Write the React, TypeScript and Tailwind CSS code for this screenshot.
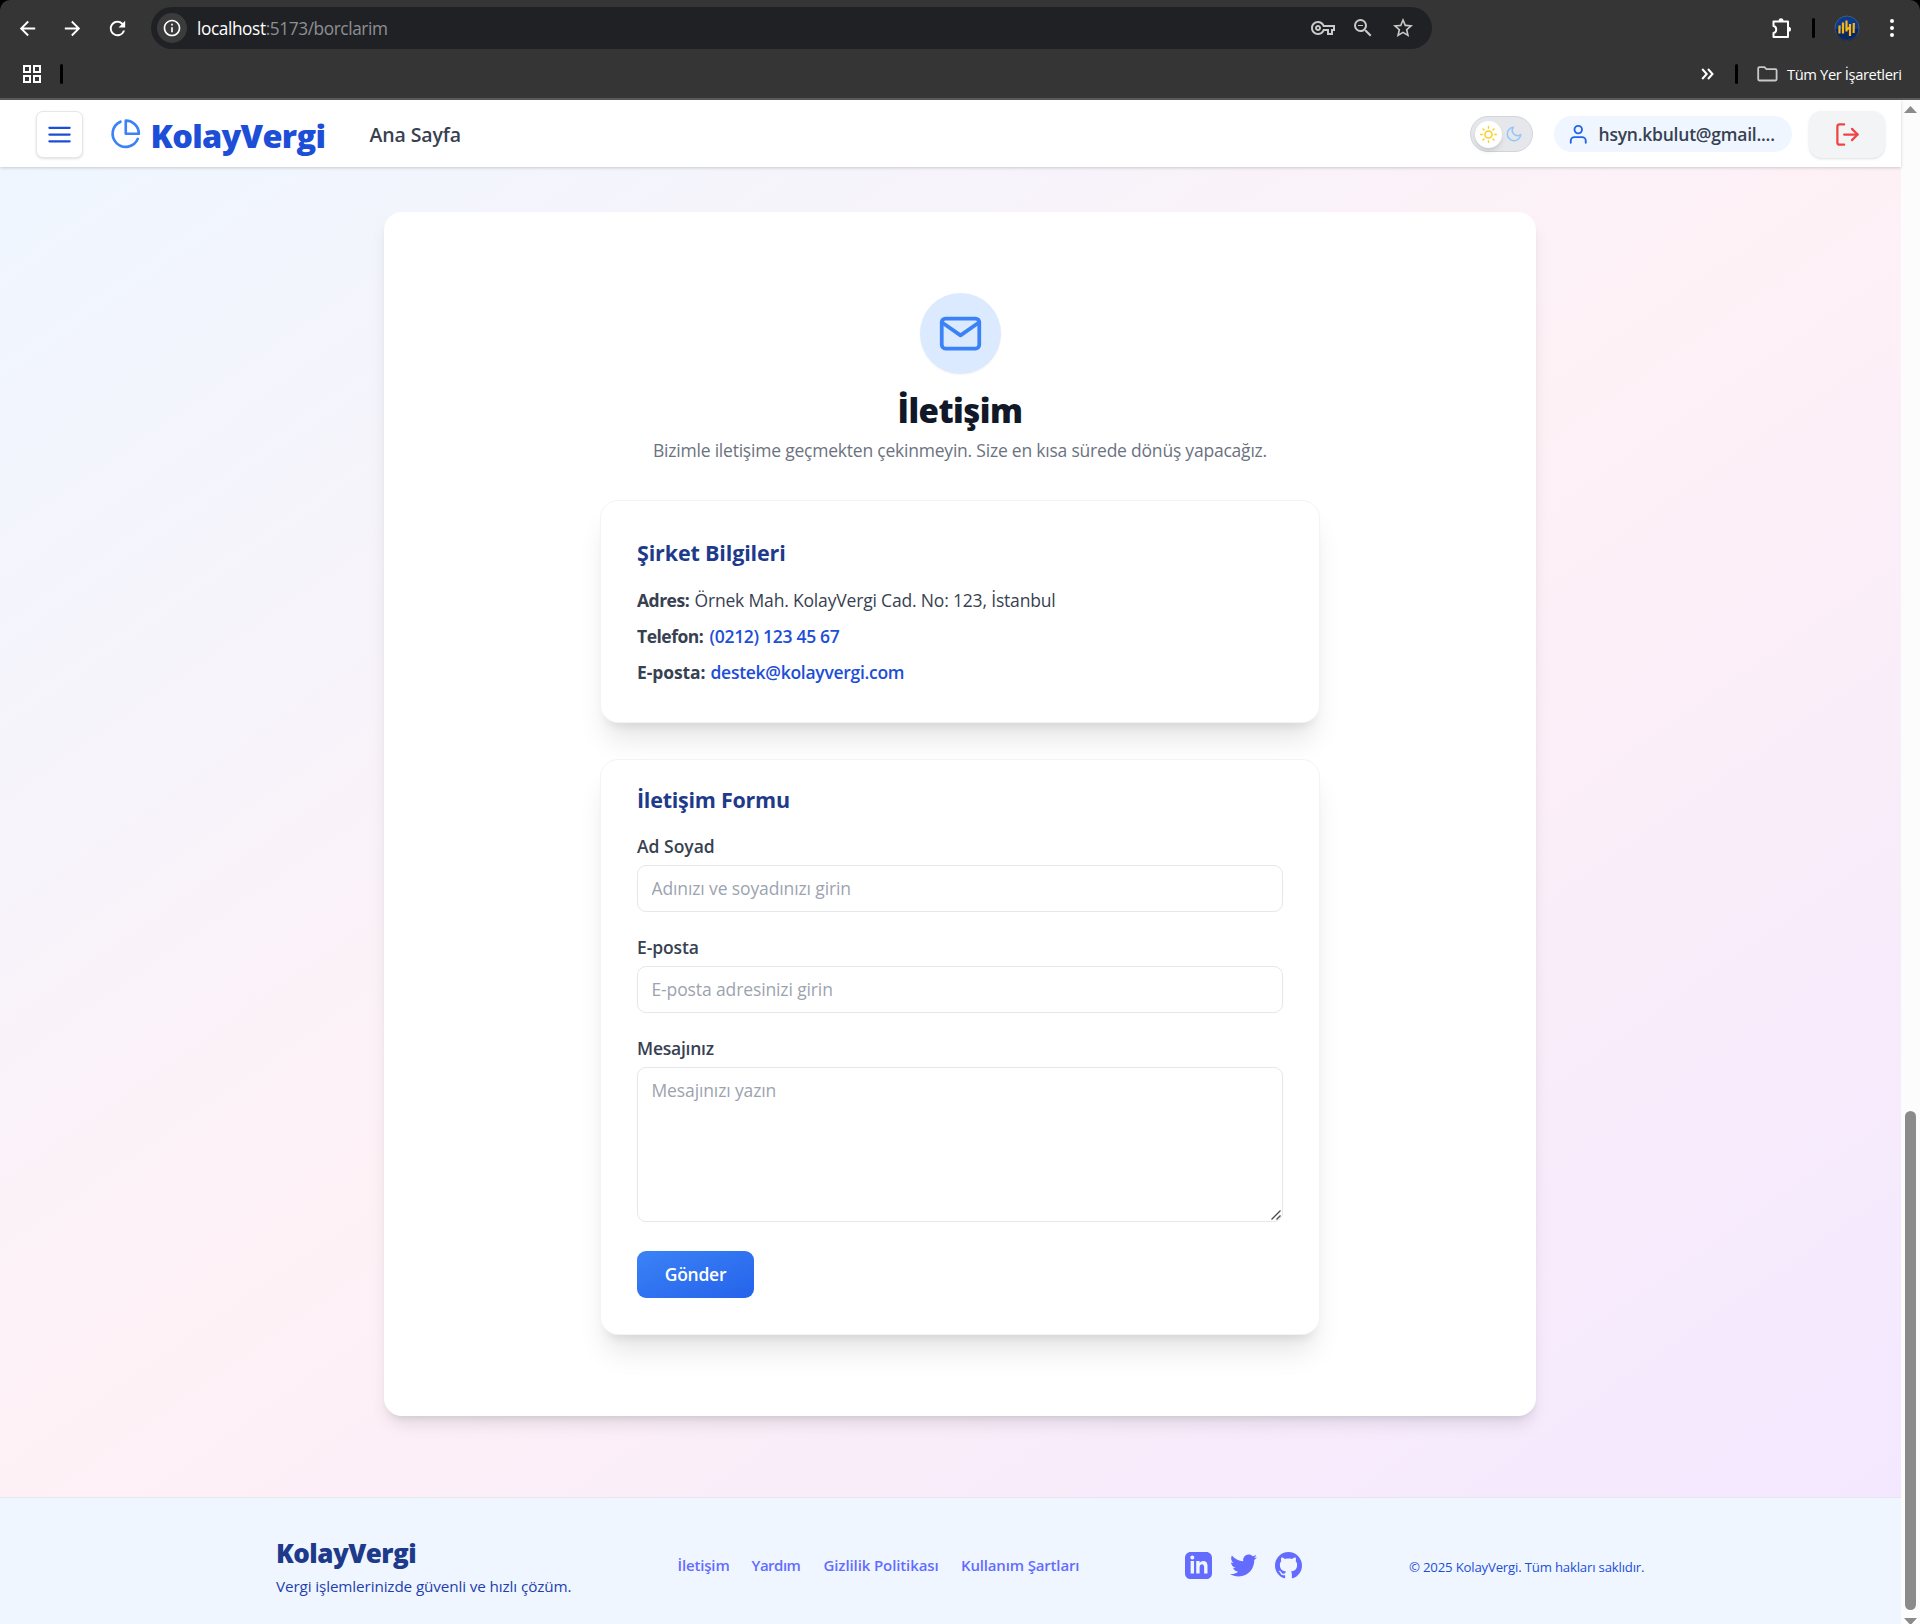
import React from "react";
import { FiLogOut, FiMail, FiMenu, FiMoon, FiPieChart, FiSun, FiUser } from "react-icons/fi";
import { MdArrowBack, MdArrowForward, MdInfoOutline, MdOutlineVpnKey, MdRefresh, MdStarBorder, MdZoomOut } from "react-icons/md";

function BrowserBar() {
  return (
    <div className="h-[100px] shrink-0 bg-black">
      <div className="flex h-full flex-col rounded-t-[10px] border-b-2 border-[#5d5a5d] bg-[#353535] text-white">
        <div className="flex h-[56px] items-center">
          <div className="flex w-[151px] items-center pl-[16px]">
            <MdArrowBack size={23} />
            <MdArrowForward size={23} className="ml-[22px]" />
            <MdRefresh size={23} className="ml-[22px]" />
          </div>
          <div className="flex h-[42px] w-[1281px] items-center rounded-full bg-[#202124] pl-[6px] pr-[17px]">
            <span className="flex size-[30px] items-center justify-center rounded-full bg-[#3b3b3b]">
              <MdInfoOutline size={20} />
            </span>
            <p className="ml-[10px] mt-[2px] whitespace-pre text-[17.250px] leading-[24px] tracking-[-0.4px]">
              localhost<span className="text-[#8d9094]">:5173/borclarim</span>
            </p>
            <div className="ml-auto flex items-center text-[#c9c9c9]">
              <MdOutlineVpnKey size={24} />
              <MdZoomOut size={24} className="ml-[16px]" />
              <MdStarBorder size={24} className="ml-[16px]" />
            </div>
          </div>
          <div className="ml-auto flex items-center">
            <svg width="24" height="24" viewBox="0 0 24 24" fill="none" stroke="white" strokeWidth="2" strokeLinejoin="round">
              <path d="M4.500 5.500h14.500v15.500h-14.500v-4c1.700-.4 2.700-1.700 2.700-3.500s-1-3.100-2.700-3.500z" />
              <path fill="white" stroke="none" d="M9.500 5a2.500 2.700 0 0 1 5 0zM19.500 10.700a2.500 2.500 0 0 1 0 5z" />
            </svg>
            <span className="ml-[19px] h-[20px] w-[3px] rounded-full bg-black" />
            <svg className="ml-[19px]" width="26" height="26" viewBox="0 0 26 26">
              <circle cx="13" cy="13" r="12" fill="#0b3a8c" stroke="#4a5a78" strokeWidth="1" />
              <path d="M1.500 14a11.500 11.500 0 0 0 23 0z" fill="#082050" opacity=".7" />
              <path d="M5.600 10.500l-.2 8M9 7.500v11M12.500 5.500v11M16 9v12M19.800 8l-.2 10M12.500 14.500l3.500-2" stroke="#f9b614" strokeWidth="2.200" fill="none" />
            </svg>
            <svg className="ml-[20px] mr-[16px]" width="24" height="24" viewBox="0 0 24 24" fill="white">
              <circle cx="12" cy="5" r="2" />
              <circle cx="12" cy="12" r="2" />
              <circle cx="12" cy="19" r="2" />
            </svg>
          </div>
        </div>
        <div className="flex h-[36px] items-center pl-[23px]">
          <svg width="18" height="18" viewBox="0 0 18 18" fill="none" stroke="white" strokeWidth="2">
            <path d="M1 1h6v6h-6zM11 1h6v6h-6zM1 11h6v6h-6zM11 11h6v6h-6z" />
          </svg>
          <span className="ml-[19px] h-[20px] w-[3px] rounded-full bg-black" />
          <div className="ml-auto flex items-center pr-[18px]">
            <svg width="13" height="12" viewBox="0 0 13 12" fill="none" stroke="white" strokeWidth="2">
              <path d="M1.200 1l4.500 5-4.500 5M7 1l4.500 5-4.500 5" />
            </svg>
            <span className="ml-[21px] h-[20px] w-[3px] rounded-full bg-black" />
            <svg className="ml-[19px]" width="21" height="16" viewBox="0 0 21 16" fill="none" stroke="#c9c9c9" strokeWidth="1.800" strokeLinejoin="round">
              <path d="M1.200 2.400q0-1.200 1.200-1.200h5l2 2h9q1.200 0 1.200 1.200v8.900q0 1.200-1.200 1.200h-16q-1.200 0-1.200-1.200z" />
            </svg>
            <span className="-mt-px ml-[9px] w-[115px] whitespace-nowrap text-[14.750px] leading-[20px] tracking-[-0.4px]">Tüm Yer İşaretleri</span>
          </div>
        </div>
      </div>
    </div>
  );
}

function Header() {
  return (
    <header className="z-10 flex h-[67px] shrink-0 items-center bg-white pl-[36px] pr-[16px] pt-px shadow-[0_1px_3px_rgba(0,0,0,0.18)]">
      <button className="flex size-[47px] items-center justify-center rounded-[7px] border border-[#e5e7eb] bg-white text-[#1d4ed8] shadow-sm">
        <FiMenu size={27} />
      </button>
      <FiPieChart size={31.5} className="ml-[27px] text-[#3b82f6]" />
      <span className="ml-[9px] w-[177px] pt-[4px] text-[32.500px] font-extrabold leading-[40px] tracking-[-0.7px] text-[#1d4ed8]">KolayVergi</span>
      <a className="ml-[42px] pt-[2px] text-[19.500px] font-semibold leading-[28px] tracking-[-0.12px] text-[#374151]">Ana Sayfa</a>
      <div className="ml-auto flex h-[36px] w-[63px] items-center rounded-full border border-[#d1d5db] bg-[#e5e7eb] pl-[4px]">
        <span className="flex size-[27px] items-center justify-center rounded-full bg-white text-[#facc15] shadow-md">
          <FiSun size={17} />
        </span>
        <FiMoon size={18} className="ml-[3px] text-[#93c5fd]" />
      </div>
      <div className="ml-[21px] flex h-[36px] w-[238px] items-center rounded-full bg-[#eff6ff] pl-[13px]">
        <FiUser size={22.5} className="text-[#2563eb]" />
        <span className="ml-[9px] whitespace-nowrap text-[17.500px] font-semibold leading-[27px] tracking-[-0.23px] text-[#374151]">hsyn.kbulut@gmail....</span>
      </div>
      <button className="ml-[17px] flex h-[47px] w-[76px] items-center justify-center rounded-[13px] bg-[#f3f4f6] text-[#ef4444] shadow-sm">
        <FiLogOut size={27} />
      </button>
    </header>
  );
}

const cardClass = "rounded-[18px] border border-[#f3f4f6] bg-white shadow-[0_22px_28px_-6px_rgba(0,0,0,0.1),0_9px_11px_-7px_rgba(0,0,0,0.1)]";
const labelClass = "block h-[27px] text-[17.500px] font-semibold leading-[27px] text-[#374151]";
const fieldClass = "block w-full rounded-[9px] border border-[#e5e7eb] bg-white px-[13.500px] text-[17.500px] leading-[27px] tracking-[-0.12px] text-[#111827] placeholder:text-[#9ca3af]";

function CompanyCard() {
  return (
    <section className={`${cardClass} h-[223px] pl-[36px] pt-[36px]`}>
      <h2 className="text-[21.500px] font-bold leading-[31px] tracking-[-0.15px] text-[#1e3a8a]">Şirket Bilgileri</h2>
      <div className="pt-[14px] text-[17.500px] leading-[36px] text-[#374151]">
        <p className="h-[36px]"><b className="inline-block w-[57.500px] font-bold tracking-[-0.5px]">Adres:</b><span className="tracking-[-0.175px]">Örnek Mah. KolayVergi Cad. No: 123, İstanbul</span></p>
        <p className="h-[36px]"><b className="inline-block w-[72.500px] font-bold tracking-[-0.5px]">Telefon:</b><a className="font-semibold tracking-[-0.3px] text-[#1d4ed8]">(0212) 123 45 67</a></p>
        <p className="h-[36px]"><b className="inline-block w-[73.500px] font-bold tracking-[-0.1px]">E-posta:</b><a className="font-semibold tracking-[-0.285px] text-[#1d4ed8]">destek@kolayvergi.com</a></p>
      </div>
    </section>
  );
}

function ContactForm() {
  return (
    <section className={`${cardClass} h-[576px] px-[36px] pt-[24px]`}>
      <h2 className="text-[21.500px] font-bold leading-[32px] tracking-[-0.25px] text-[#1e3a8a]">İletişim Formu</h2>
      <form className="pt-[17px]">
        <label className={labelClass}>Ad Soyad</label>
        <input className={`${fieldClass} mt-[5px] h-[47px] pb-[2px]`} placeholder="Adınızı ve soyadınızı girin" />
        <label className={`${labelClass} mt-[22px] tracking-[-0.1px]`}>E-posta</label>
        <input className={`${fieldClass} mt-[5px] h-[47px] pb-[2px]`} placeholder="E-posta adresinizi girin" />
        <label className={`${labelClass} mt-[22px] tracking-[-0.24px]`}>Mesajınız</label>
        <div className="relative mt-[5px]">
          <textarea className={`${fieldClass} h-[155px] resize-none py-[9px]`} placeholder="Mesajınızı yazın" />
          <svg className="absolute bottom-[2px] right-[2px]" width="10" height="10" viewBox="0 0 10 10" stroke="#4b4b4b" strokeWidth="1.400">
            <path d="M.5 9.500L9.500.5M5.500 9.500l4-4" />
          </svg>
        </div>
        <button type="button" className="mt-[29px] h-[47px] w-[117px] rounded-[9px] bg-[linear-gradient(to_bottom_right,#3b82f6,#2563eb)] text-[17.500px] font-semibold leading-[27px] tracking-[-0.26px] text-white">Gönder</button>
      </form>
    </section>
  );
}

function Footer() {
  return (
    <footer className="flex h-[127px] shrink-0 border-t border-[#e5e7eb] bg-[#eff6ff] pl-[276px]">
      <div className="w-[401.500px] pt-[37px]">
        <div className="text-[26px] font-extrabold leading-[36px] tracking-[-0.53px] text-[#1e3a8a]">KolayVergi</div>
        <div className="mt-[3px] whitespace-nowrap text-[15.250px] leading-[24px] tracking-[-0.115px] text-[#1e40af]">Vergi işlemlerinizde güvenli ve hızlı çözüm.</div>
      </div>
      <nav className="flex w-[507.500px] whitespace-nowrap pt-[55px] text-[15px] font-semibold leading-[24px] text-[#646cff]">
        <a className="w-[74px] tracking-[-0.16px]">İletişim</a>
        <a className="w-[72px] tracking-[-0.5px]">Yardım</a>
        <a className="w-[137.500px] tracking-[-0.11px]">Gizlilik Politikası</a>
        <a className="tracking-[-0.16px]">Kullanım Şartları</a>
      </nav>
      <div className="flex w-[224px] gap-[18px] pt-[54px] text-[#646cff]">
        <svg width="27" height="27" viewBox="0 0 24 24" fill="currentColor">
          <path d="M19 0h-14c-2.761 0-5 2.239-5 5v14c0 2.761 2.239 5 5 5h14c2.762 0 5-2.239 5-5v-14c0-2.761-2.238-5-5-5zm-11 19h-3v-11h3v11zm-1.500-12.268c-.966 0-1.750-.79-1.750-1.764s.784-1.764 1.750-1.764 1.750.79 1.750 1.764-.783 1.764-1.750 1.764zm13.500 12.268h-3v-5.604c0-3.368-4-3.113-4 0v5.604h-3v-11h3v1.765c1.396-2.586 7-2.777 7 2.476v6.759z" />
        </svg>
        <svg width="27" height="27" viewBox="0 0 24 24" fill="currentColor">
          <path d="M24 4.557c-.883.392-1.832.656-2.828.775 1.017-.609 1.798-1.574 2.165-2.724-.951.564-2.005.974-3.127 1.195-.897-.957-2.178-1.555-3.594-1.555-3.179 0-5.515 2.966-4.797 6.045-4.091-.205-7.719-2.165-10.148-5.144-1.290 2.213-.669 5.108 1.523 6.574-.806-.026-1.566-.247-2.229-.616-.054 2.281 1.581 4.415 3.949 4.890-.693.188-1.452.232-2.224.084.626 1.956 2.444 3.379 4.600 3.419-2.070 1.623-4.678 2.348-7.290 2.040 2.179 1.397 4.768 2.212 7.548 2.212 9.142 0 14.307-7.721 13.995-14.646.962-.695 1.797-1.562 2.457-2.549z" />
        </svg>
        <svg width="27" height="27" viewBox="0 0 24 24" fill="currentColor">
          <path d="M12 0c-6.626 0-12 5.373-12 12 0 5.302 3.438 9.800 8.207 11.387.599.111.793-.261.793-.577v-2.234c-3.338.726-4.033-1.416-4.033-1.416-.546-1.387-1.333-1.756-1.333-1.756-1.089-.745.083-.729.083-.729 1.205.084 1.839 1.237 1.839 1.237 1.070 1.834 2.807 1.304 3.492.997.107-.775.418-1.305.762-1.604-2.665-.305-5.467-1.334-5.467-5.931 0-1.311.469-2.381 1.236-3.221-.124-.303-.535-1.524.117-3.176 0 0 1.008-.322 3.301 1.230.957-.266 1.983-.399 3.003-.404 1.020.005 2.047.138 3.006.404 2.291-1.552 3.297-1.230 3.297-1.230.653 1.653.242 2.874.118 3.176.770.840 1.235 1.911 1.235 3.221 0 4.609-2.807 5.624-5.479 5.921.430.372.823 1.102.823 2.222v3.293c0 .319.192.694.801.576 4.765-1.589 8.199-6.086 8.199-11.386 0-6.627-5.373-12-12-12z" />
        </svg>
      </div>
      <div className="whitespace-nowrap pt-[60px] text-[13.200px] leading-[18px] tracking-[-0.19px] text-[#1d4ed8]">© 2025 KolayVergi. Tüm hakları saklıdır.</div>
    </footer>
  );
}

function ScrollBar() {
  return (
    <div className="flex w-[19px] flex-col items-center bg-[#fcfcfc]">
      <svg className="mt-[6px] shrink-0" width="13" height="7" viewBox="0 0 13 7"><path d="M6.500 0L13 7H0z" fill="#8b8b8b" /></svg>
      <div className="mt-[998px] h-[499px] w-[11px] shrink-0 rounded-full bg-[#8b8b8b]" />
      <svg className="mt-[8px] shrink-0" width="13" height="6" viewBox="0 0 13 6"><path d="M0 0H13L7.500 6H5.500z" fill="#8b8b8b" /></svg>
    </div>
  );
}

export default function App() {
  return (
    <div className="flex h-[1624px] w-[1920px] flex-col overflow-hidden font-['Open_Sans','Noto_Sans',sans-serif]">
      <BrowserBar />
      <div className="flex h-[1524px]">
        <div className="flex w-[1901px] flex-col">
          <Header />
          <main className="h-[1330px] bg-[linear-gradient(to_bottom_right,#eff6ff,#fef1f6,#f3e8ff)] pl-[384px] pt-[45px]">
            <div className="h-[1204px] w-[1152px] rounded-[18px] bg-white px-[216px] pt-[81px] shadow-[0_11px_17px_-3px_rgba(0,0,0,0.1),0_5px_7px_-4px_rgba(0,0,0,0.1)]">
              <div className="flex flex-col items-center">
                <span className="flex size-[81px] items-center justify-center rounded-full bg-[#dbeafe] text-[#3b82f6] shadow-xs">
                  <FiMail size={45} />
                </span>
                <h1 className="mt-[17px] text-[33px] font-extrabold leading-[40px] tracking-[-0.55px] text-[#111827]">İletişim</h1>
                <p className="mt-[6px] whitespace-nowrap text-[17.500px] leading-[27px] tracking-[-0.215px] text-[#6b7280]">
                  Bizimle iletişime geçmekten çekinmeyin. Size en kısa sürede dönüş yapacağız.
                </p>
              </div>
              <div className="mt-[36px] flex flex-col gap-[36px]">
                <CompanyCard />
                <ContactForm />
              </div>
            </div>
          </main>
          <Footer />
        </div>
        <ScrollBar />
      </div>
    </div>
  );
}
